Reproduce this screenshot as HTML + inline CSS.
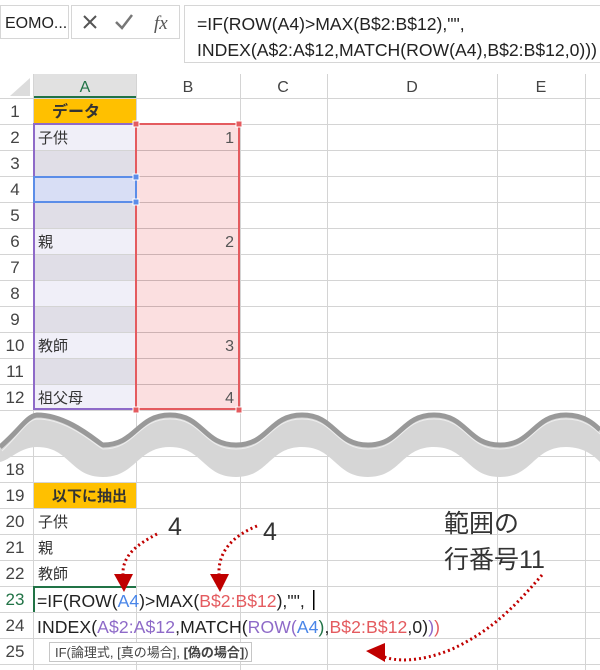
<!DOCTYPE html><html><head><meta charset="utf-8"><style>
body{margin:0;width:600px;height:670px;overflow:hidden;background:#fff;font-family:"Liberation Sans","Noto Sans CJK JP",sans-serif;position:relative}
</style></head><body>
<svg width="600" height="670" style="position:absolute;left:0;top:0" font-family="Liberation Sans, Noto Sans CJK JP, sans-serif">
<rect x="0" y="0" width="600" height="74" fill="#fff"/>
<rect x="0.5" y="5.5" width="68" height="33" fill="#fff" stroke="#d6d6d6"/>
<rect x="71.5" y="5.5" width="108" height="33" fill="#fff" stroke="#d6d6d6"/>
<rect x="184.5" y="5.5" width="420" height="57" fill="#fff" stroke="#d6d6d6"/>
<text x="5" y="28" font-size="16" fill="#222">EOMO...</text>
<path d="M84 16 L96 28 M96 16 L84 28" stroke="#555" stroke-width="2"/>
<path d="M116 22 L122 28 L132 15" stroke="#777" stroke-width="2.5" fill="none"/>
<text x="154" y="29" font-size="19" font-style="italic" font-family="Liberation Serif,serif" fill="#555">fx</text>
<text x="197" y="30" font-size="17.6" fill="#222">=IF(ROW(A4)&gt;MAX(B$2:B$12),"",</text>
<text x="197" y="56" font-size="17.6" fill="#222" textLength="400">INDEX(A$2:A$12,MATCH(ROW(A4),B$2:B$12,0)))</text>
<rect x="0" y="74" width="600" height="24" fill="#fff"/>
<rect x="33" y="74" width="103" height="24" fill="#e1e1e1"/>
<rect x="33" y="96" width="103" height="2.5" fill="#217346"/>
<path d="M10 96 L30 96 L30 78 Z" fill="#dcdcdc"/>
<g font-size="16" fill="#444" text-anchor="middle">
<text x="85" y="92" fill="#217346">A</text><text x="188" y="92">B</text><text x="283" y="92">C</text><text x="412" y="92">D</text><text x="541" y="92">E</text>
</g>
<rect x="33" y="98" width="103" height="26" fill="#ffc000"/>
<rect x="33" y="124" width="103" height="286" fill="#f0eff8"/>
<g fill="#e0dee7"><rect x="33" y="150" width="103" height="26"/><rect x="33" y="202" width="103" height="26"/><rect x="33" y="254" width="103" height="26"/><rect x="33" y="306" width="103" height="26"/><rect x="33" y="358" width="103" height="26"/></g>
<rect x="33" y="176" width="103" height="26" fill="#d8def5"/>
<rect x="136" y="124" width="104" height="286" fill="#fbdfe0"/>
<rect x="33" y="482" width="103" height="26" fill="#ffc000"/>
<g stroke="#d4d4d4" stroke-width="1">
<path d="M33.5 74V670M136.5 74V670M240.5 74V670M327.5 74V670M497.5 74V670M585.5 74V670"/>
<path d="M0 98.5H600M0 124.5H600M0 150.5H600M0 176.5H600M0 202.5H600M0 228.5H600M0 254.5H600M0 280.5H600M0 306.5H600M0 332.5H600M0 358.5H600M0 384.5H600M0 410.5H600M0 456.5H600M0 482.5H600M0 508.5H600M0 534.5H600M0 560.5H600M0 586.5H600M0 612.5H600M0 638.5H600M0 664.5H600"/>
</g>
<g stroke="#cdb2b3"><path d="M137 150.5H239M137 176.5H239M137 202.5H239M137 228.5H239M137 254.5H239M137 280.5H239M137 306.5H239M137 332.5H239M137 358.5H239M137 384.5H239"/></g>
<rect x="34" y="124" width="102" height="285" fill="none" stroke="#8e6ac8" stroke-width="2"/>
<rect x="136" y="124" width="103" height="285" fill="none" stroke="#e45b5f" stroke-width="2"/>
<rect x="34" y="177" width="102" height="25" fill="none" stroke="#5b8de8" stroke-width="2"/>
<g fill="#e45b5f" stroke="#fff"><rect x="133" y="121" width="6" height="6"/><rect x="236" y="121" width="6" height="6"/><rect x="133" y="407" width="6" height="6"/><rect x="236" y="407" width="6" height="6"/></g>
<g fill="#5b8de8" stroke="#fff"><rect x="133" y="174" width="6" height="6"/><rect x="133" y="199" width="6" height="6"/></g>
<g font-size="17" fill="#444" text-anchor="middle">
<text x="15" y="117">1</text><text x="15" y="143">2</text><text x="15" y="169">3</text><text x="15" y="195">4</text><text x="15" y="221">5</text><text x="15" y="247">6</text><text x="15" y="273">7</text><text x="15" y="299">8</text><text x="15" y="325">9</text><text x="15" y="351">10</text><text x="15" y="377">11</text><text x="15" y="403">12</text>
<text x="15" y="475">18</text><text x="15" y="501">19</text><text x="15" y="527">20</text><text x="15" y="553">21</text><text x="15" y="579">22</text><text x="15" y="605" fill="#217346">23</text><text x="15" y="631">24</text><text x="15" y="657">25</text>
</g>
<rect x="33" y="586" width="2" height="26" fill="#217346"/><rect x="33" y="586" width="103" height="2" fill="#217346"/>
<g font-size="15" fill="#333">
<text x="52" y="117" font-weight="bold" font-size="16">データ</text>
<text x="38" y="143">子供</text><text x="38" y="247">親</text><text x="38" y="351">教師</text><text x="38" y="403">祖父母</text>
<text x="52" y="501" font-weight="bold">以下に抽出</text>
<text x="38" y="527">子供</text><text x="38" y="553">親</text><text x="38" y="579">教師</text>
</g>
<g font-size="16" fill="#555" text-anchor="end"><text x="234" y="143">1</text><text x="234" y="247">2</text><text x="234" y="351">3</text><text x="234" y="403">4</text></g>
<path d="M0 447 C20 430 27 416 37 415 C70 415 100 445 103 445 C136 445 137 415 170 415 C203 415 203 445 236 445 C269 445 269 415 302 415 C335 415 335 445 368 445 C401 445 401 415 434 415 C467 415 467 445 500 445 C533 445 533 415 566 415 C585 415 595 425 600 430 L600 462 C595 457 585 447 566 447 C533 447 533 477 500 477 C467 477 467 447 434 447 C401 447 401 477 368 477 C335 477 335 447 302 447 C269 447 269 477 236 477 C203 477 203 447 170 447 C137 447 136 477 103 477 C70 477 70 447 37 447 C20 447 10 460 0 462 Z" fill="#d6d6d6"/>
<path d="M0 447 C20 430 27 416 37 415 C70 415 100 445 103 445 C136 445 137 415 170 415 C203 415 203 445 236 445 C269 445 269 415 302 415 C335 415 335 445 368 445 C401 445 401 415 434 415 C467 415 467 445 500 445 C533 445 533 415 566 415 C585 415 595 425 600 430" fill="none" stroke="#999" stroke-width="5"/>
<path d="M2 451 C20 434 27 420 37 419 C70 419 100 449 103 449 C136 449 137 419 170 419 C203 419 203 449 236 449 C269 449 269 419 302 419 C335 419 335 449 368 449 C401 449 401 419 434 419 C467 419 467 449 500 449 C533 449 533 419 566 419 C585 419 595 429 600 434" fill="none" stroke="#eee" stroke-width="1"/>
<text x="37" y="607" font-size="17.6" fill="#222">=IF(ROW(<tspan fill="#4a86e8">A4</tspan>)&gt;MAX(<tspan fill="#e45b5f">B$2:B$12</tspan>),"",</text>
<rect x="313" y="590" width="1.5" height="20" fill="#000"/>
<text x="37" y="633" font-size="17.6" fill="#222" textLength="403">INDEX(<tspan fill="#8e6ac8">A$2:A$12</tspan>,MATCH(<tspan fill="#8e6ac8">ROW(</tspan><tspan fill="#4a86e8">A4</tspan><tspan fill="#217346">)</tspan>,<tspan fill="#e45b5f">B$2:B$12</tspan>,0)<tspan fill="#8e6ac8">)</tspan><tspan fill="#e45b5f">)</tspan></text>
<rect x="49.5" y="642.5" width="202" height="19" fill="#fff" stroke="#c6c6c6"/>
<text x="55" y="657" font-size="13" fill="#444">IF(論理式, [真の場合], <tspan font-weight="bold">[偽の場合]</tspan>)</text>
<g font-size="25" fill="#333" font-family="Liberation Sans Narrow, Liberation Sans, sans-serif"><text x="168" y="535">4</text><text x="263" y="540">4</text></g>
<text x="444" y="532" font-size="25" fill="#333">範囲の</text>
<text x="444" y="568" font-size="25" fill="#333">行番号11</text>
<g fill="none" stroke="#c00000" stroke-width="3" stroke-dasharray="2 3">
<path d="M157 534 C138 544 122 555 123 575"/>
<path d="M257 526 C235 535 218 550 219 574"/>
<path d="M542 575 C520 600 495 630 450 650 C420 662 395 662 382 656"/>
</g>
<g fill="#c00000"><path d="M114 574 L133 574 L124 592 Z"/><path d="M210 574 L229 574 L220 592 Z"/><path d="M366 651 L385 643 L385 662 Z"/></g>
</svg>
</body></html>
